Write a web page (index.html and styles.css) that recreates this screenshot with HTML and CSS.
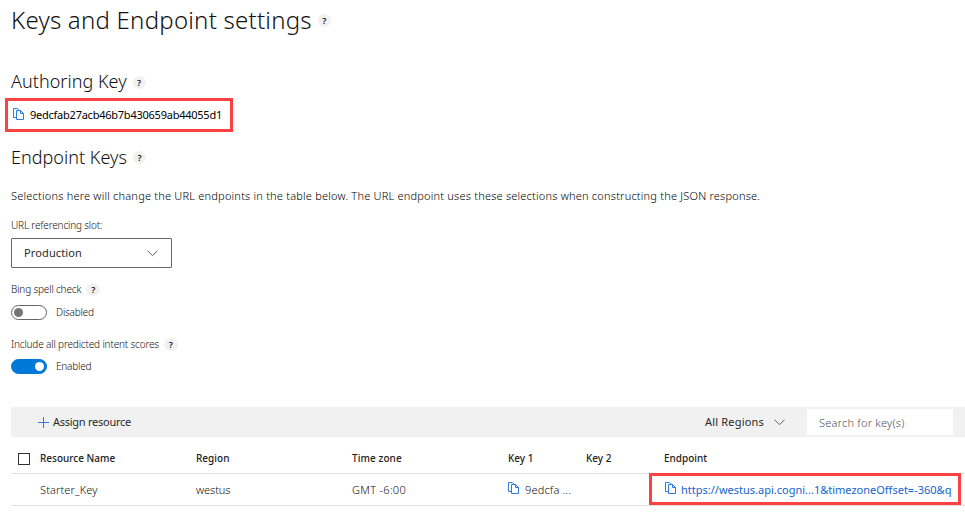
FILE: index.html
```
<!DOCTYPE html>
<html lang="en">
<head>
<meta charset="utf-8">
<title>Keys and Endpoint settings</title>
<link rel="stylesheet" href="styles.css">
</head>
<body>
<svg class="defs" aria-hidden="true">
  <symbol id="copy" viewBox="0 0 11 12">
    <path d="M3.5 9.5h-3v-9h3.8l1.6 1.6M3.5 2.5h4l3 3v6h-7zM7.5 2.5v3h3" fill="none" stroke="currentColor"/>
  </symbol>
  <symbol id="chevron" viewBox="0 0 11 7">
    <path d="M.5.7l5 5 5-5" fill="none" stroke="currentColor"/>
  </symbol>
</svg>
<main class="page">
  <h1 class="title">Keys and Endpoint settings <span class="help">?</span></h1>
  <h2 class="heading">Authoring Key <span class="help">?</span></h2>
  <div class="key-box"><svg class="copy"><use href="#copy"/></svg><span class="key">9edcfab27acb46b7b430659ab44055d1</span></div>
  <h2 class="heading heading-endpoint">Endpoint Keys <span class="help">?</span></h2>
  <p class="description">Selections here will change the URL endpoints in the table below. The URL endpoint uses these selections when constructing the JSON response.</p>

  <div class="label label-slot">URL referencing slot:</div>
  <div class="select"><span>Production</span><svg class="chevron"><use href="#chevron"/></svg></div>

  <div class="label label-spell">Bing spell check <span class="help">?</span></div>
  <div class="toggle-row"><span class="toggle"></span><span class="state">Disabled</span></div>

  <div class="label label-intent">Include all predicted intent scores <span class="help">?</span></div>
  <div class="toggle-row toggle-row-intent"><span class="toggle toggle-on"></span><span class="state">Enabled</span></div>

  <section class="resources">
    <div class="toolbar">
      <svg class="plus" viewBox="0 0 11 11"><path d="M5.5 0v11M0 5.5h11" fill="none" stroke="currentColor"/></svg>
      <span class="assign">Assign resource</span>
      <span class="regions">All Regions</span>
      <svg class="chevron"><use href="#chevron"/></svg>
      <div class="search">Search for key(s)</div>
    </div>
    <div class="row row-head">
      <span class="checkbox"></span>
      <span class="th-name">Resource Name</span>
      <span class="th-region">Region</span>
      <span class="th-zone">Time zone</span>
      <span>Key 1</span>
      <span>Key 2</span>
      <span>Endpoint</span>
    </div>
    <div class="row row-body">
      <span></span>
      <span class="td-name">Starter_Key</span>
      <span class="td-region">westus</span>
      <span class="td-zone">GMT -6:00</span>
      <span class="td-key"><svg class="copy"><use href="#copy"/></svg>9edcfa ...</span>
      <span></span>
      <div class="endpoint"><svg class="copy"><use href="#copy"/></svg><span class="url">https://westus.api.cogni...1&amp;timezoneOffset=-360&amp;q</span></div>
    </div>
  </section>
</main>
</body>
</html>
```
FILE: styles.css
```
* { box-sizing: border-box; }
body {
  margin: 0;
  background: #fff;
  color: #111;
  font: 300 11px/16px "Noto Sans", "Open Sans", sans-serif;
  overflow: hidden;
  white-space: nowrap;
}
.defs { position: absolute; width: 0; height: 0; }
.page { display: flex; flex-direction: column; padding-left: 11px; }

.title, .heading { display: flex; align-items: center; margin: 0; font-weight: 300; }
.title { height: 38px; padding-top: 1px; font-size: 24px; letter-spacing: .24px; }
.heading { height: 24px; margin-top: 31px; font-size: 18px; letter-spacing: .03px; }
.heading-endpoint { margin-top: 13px; }

.help {
  width: 13px;
  height: 13px;
  margin: 3px 0 0 6px;
  border-radius: 50%;
  background: #f1f1f1;
  font-size: 9px;
  font-weight: 600;
  line-height: 13px;
  letter-spacing: 0;
  text-align: center;
}
.heading-endpoint .help { margin-top: 1px; }
.title .help { margin-top: 2px; }

.copy { flex: none; width: 11px; height: 12px; color: #2b7de0; }
.chevron { flex: none; width: 11px; height: 7px; color: #605e5c; }

.key-box {
  display: flex;
  width: 228px;
  height: 34px;
  margin: 5px 0 0 -6px;
  padding: 7px 0 0 5px;
  border: 3px solid #fb4141;
}
.key { margin: -1px 0 0 6px; color: #000; font-weight: 400; letter-spacing: -.24px; }

.description { height: 16px; margin: 19px 0 0; color: #000; letter-spacing: .21px; }

.label { display: flex; align-items: center; height: 16px; font-size: 10px; letter-spacing: -.15px; }
.label .help { margin: 0 0 0 5px; width: 14px; }
.label-slot { margin-top: 13px; }
.label-spell { margin-top: 13px; }
.label-intent { margin-top: 16px; }

.select {
  display: flex;
  align-items: center;
  justify-content: space-between;
  width: 161px;
  height: 30px;
  margin-top: 5px;
  padding: 0 13px 0 12px;
  border: 1px solid #666;
  border-radius: 1px;
  color: #2b2b2b;
  font-weight: 400;
  letter-spacing: .13px;
}

.toggle-row { display: flex; align-items: center; height: 15px; margin-top: 8px; font-size: 10px; letter-spacing: -.2px; }
.toggle-row-intent { margin-top: 7px; }
.toggle {
  display: flex;
  align-items: center;
  width: 36px;
  height: 15px;
  margin-right: 9px;
  padding: 0 2px;
  border: 1px solid #666;
  border-radius: 8px;
}
.toggle::before { content: ""; width: 9px; height: 9px; border-radius: 50%; background: #767676; }
.toggle-on { justify-content: flex-end; border-color: #0078d7; background: #0078d7; }
.toggle-on::before { background: #fff; }
.state { margin-top: -1px; }

.resources { margin-top: 33px; }
.toolbar { display: flex; align-items: center; height: 30px; padding: 0 12px 0 27px; background: #f1f1f1; }
.plus { width: 11px; height: 11px; color: #2b7de0; }
.assign { margin-left: 4px; color: #2b2b2b; font-weight: 400; letter-spacing: -.26px; }
.regions { margin-left: auto; color: #2b2b2b; font-weight: 400; letter-spacing: .19px; }
.toolbar .chevron { margin-left: 10px; }
.search {
  width: 146px;
  height: 26px;
  margin-left: 22px;
  padding-left: 12px;
  background: #fff;
  color: #505050;
  line-height: 28px;
  letter-spacing: .23px;
}

.row {
  display: grid;
  grid-template-columns: 29px 156px 156px 156px 78px 78px 301px;
  align-items: center;
  border-bottom: 1px solid #e1e1e1;
}
.row-head { height: 37px; padding-top: 5px; color: #222; font-size: 10px; font-weight: 500; }
.th-region { letter-spacing: .03px; }
.th-zone { letter-spacing: .08px; }
.checkbox { width: 12px; height: 12px; margin: 3px 0 0 7px; border: 1px solid #333; }
.row-body { height: 32px; }
.td-name { letter-spacing: .12px; }
.td-region { letter-spacing: -.05px; }
.td-zone { letter-spacing: .3px; }
.td-key { display: flex; gap: 6px; letter-spacing: .16px; }
.endpoint {
  display: flex;
  align-items: center;
  width: 312px;
  height: 32px;
  margin: -1px 0 0 -15px;
  padding: 1px 0 0 13px;
  border: 3px solid #fb4141;
}
.endpoint .copy { margin-top: -3px; }
.url { margin-left: 5px; color: #1464cc; font-weight: 400; letter-spacing: 0; }
```
